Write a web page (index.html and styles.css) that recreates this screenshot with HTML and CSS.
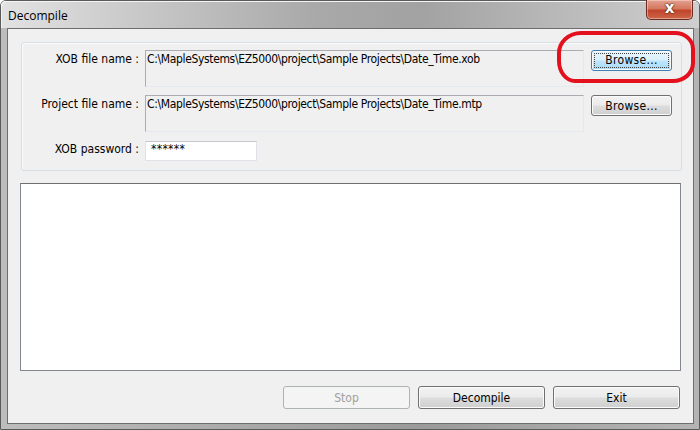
FILE: index.html
```html
<!DOCTYPE html>
<html>
<head>
<meta charset="utf-8">
<link rel="stylesheet" href="styles.css">
</head>
<body>
<div class="window">
  <div class="titlebar">
    <span class="title">Decompile</span>
    <div class="close"><span>x</span></div>
  </div>
  <div class="frame">
    <div class="client">
      <div class="group">
        <div class="row">
          <div class="label">XOB file name :</div>
          <div class="field multi">C:\MapleSystems\EZ5000\project\Sample Projects\Date_Time.xob</div>
          <button class="btn browse focused"><span class="focusrect">Browse...</span></button>
        </div>
        <div class="row">
          <div class="label">Project file name :</div>
          <div class="field multi">C:\MapleSystems\EZ5000\project\Sample Projects\Date_Time.mtp</div>
          <button class="btn browse">Browse...</button>
        </div>
        <div class="row">
          <div class="label">XOB password :</div>
          <div class="field pass">******</div>
        </div>
      </div>
      <div class="output"></div>
      <div class="actions">
        <button class="btn action disabled">Stop</button>
        <button class="btn action">Decompile</button>
        <button class="btn action">Exit</button>
      </div>
    </div>
  </div>
  <div class="annotation"></div>
</div>
</body>
</html>
```

FILE: styles.css
```css
* { box-sizing: border-box; }
html, body { margin: 0; padding: 0; background: #ffffff; }
body { width: 700px; height: 430px; overflow: hidden; font-family: "DejaVu Sans Condensed", "DejaVu Sans", sans-serif; font-size: 12px; color: #000; }

.window {
  position: relative;
  width: 700px;
  height: 430px;
  border: 1px solid #5a5a5a;
  border-radius: 6px 6px 0 0;
  background: linear-gradient(90deg, #bdbdbd 0%, #a6a6a6 40%, #9a9a9a 60%, #b4b4b4 100%);
  display: flex;
  flex-direction: column;
}
.titlebar {
  height: 27px;
  display: flex;
  align-items: center;
  padding-left: 7px;
  background: linear-gradient(90deg, #e2e2e2 0%, #c8c8c8 20%, #a9a9a9 45%, #a2a2a2 60%, #b9b9b9 80%, #cfcfcf 100%);
  border-radius: 5px 5px 0 0;
  position: relative;
  box-shadow: inset 1px 1px 0 #f4f4f4;
}
.title { font-family: "Open Sans", "DejaVu Sans", sans-serif; font-size: 12px; color: #000; margin-top: 1px; }
.close {
  position: absolute;
  right: 6px;
  top: -1px;
  width: 47px;
  height: 20px;
  border: 1px solid #6b2a22;
  border-top: none;
  border-radius: 0 0 5px 5px;
  background: linear-gradient(180deg, #e3a191 0%, #d4785f 45%, #c0452b 55%, #cc6548 100%);
  box-shadow: inset 0 0 0 1px rgba(255,220,210,0.5);
  display: flex;
  align-items: center;
  justify-content: center;
}
.close span {
  font-family: "DejaVu Sans", sans-serif;
  font-weight: bold;
  font-size: 15px;
  line-height: 1;
  color: #fff;
  margin-top: -3px;
  text-shadow: 0 0 2px #3a1a14, 0 0 1px #3a1a14;
}
.frame {
  flex: 1;
  padding: 0 6px 5px 6px;
  display: flex;
}
.client {
  flex: 1;
  border: 1px solid #6e6e6e;
  background: #f0f0f0;
  display: flex;
  flex-direction: column;
  padding: 13px 11px 0 12px;
}
.group {
  margin-left: 1px;
  height: 129px;
  border: 1px solid #d5dfe5;
  border-radius: 3px;
  box-shadow: inset 1px 1px 0 #fbfbfb;
  padding: 7px 9px 0 0;
  display: flex;
  flex-direction: column;
  gap: 8px;
}
.row { display: flex; align-items: flex-start; gap: 7px; }
.label {
  width: 117px;
  text-align: right;
  line-height: 18px;
  flex: none;
  margin-right: -1px;
}
.field {
  border: 1px solid #abadb3;
  border-right-color: #e3e9ef;
  border-bottom-color: #e3e9ef;
  padding: 0 1px;
  line-height: 17px;
  white-space: nowrap;
}
.field.multi { width: 439px; height: 37px; background: #f0f0f0; letter-spacing: -0.35px; }
.field.pass {
  width: 112px;
  height: 20px;
  background: #fff;
  border-color: #dfe3e8;
  border-top-color: #c5c9cf;
  padding-left: 5px;
  margin-top: 1px;
  font-size: 12px;
  line-height: 15px;
  letter-spacing: 0.3px;
}
.btn {
  font-family: "DejaVu Sans Condensed", "DejaVu Sans", sans-serif;
  font-size: 12px;
  color: #000;
  border: 1px solid #707070;
  border-radius: 3px;
  background: linear-gradient(180deg, #f2f2f2 0%, #ebebeb 48%, #dddddd 52%, #cfcfcf 100%);
  box-shadow: inset 0 0 0 1px #fbfbfb;
  padding: 0;
  display: flex;
  align-items: center;
  justify-content: center;
}
.browse { width: 81px; height: 21px; letter-spacing: 0.3px; }
.browse.focused {
  border-color: #3c7fb1;
  background: linear-gradient(180deg, #eaf6fd 0%, #d9f0fc 48%, #bee6fd 52%, #a7d9f5 100%);
}
.focusrect {
  display: block;
  width: 75px;
  height: 15px;
  line-height: 13px;
  border: 1px dotted #444;
}
.output {
  margin-top: 12px;
  width: 661px;
  height: 188px;
  border: 1px solid #828790;
  border-top-color: #6f6f6f;
  background: #ffffff;
}
.actions {
  margin-top: 15px;
  display: flex;
  justify-content: flex-end;
  gap: 8px;
  padding-right: 2px;
}
.action { width: 127px; height: 23px; }
.action.disabled {
  border-color: #adb2b5;
  background: #f4f4f4;
  color: #a0a0a0;
  box-shadow: none;
}
.annotation {
  position: absolute;
  left: 556px;
  top: 30px;
  width: 138px;
  height: 52px;
  border: 4px solid #e3111d;
  border-radius: 24px 20px 22px 18px / 22px 18px 20px 22px;
}
```
